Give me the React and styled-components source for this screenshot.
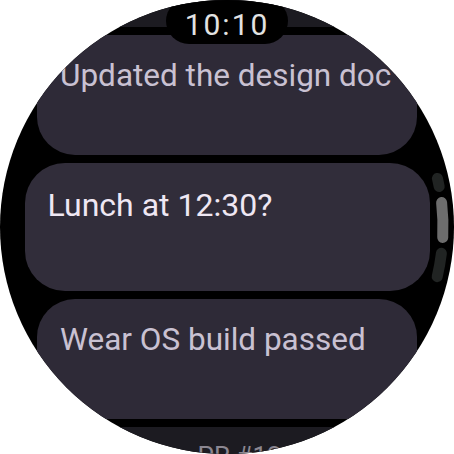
import styled, { createGlobalStyle } from "styled-components";

const GlobalStyle = createGlobalStyle`
  html, body {
    margin: 0;
    padding: 0;
    background: #ffffff;
  }
  body {
    font-family: Roboto, "Noto Sans", sans-serif;
  }
`;

// first item is scrolled up behind the clock, its text is out of view
const messages = [
  { id: 0, text: "", size: "far" },
  { id: 1, text: "Updated the design doc", size: "near" },
  { id: 2, text: "Lunch at 12:30?", size: "focus" },
  { id: 3, text: "Wear OS build passed", size: "near" },
  { id: 4, text: "Reviewing PR #1284", size: "far" },
];

const sizes = {
  focus: { w: 405, h: 128, r: 40, fs: 32, lh: 40, pt: 22, pl: 23, bg: "#312d3a", fg: "#efe7f3" },
  near: { w: 380, h: 120, r: 38, fs: 31.5, lh: 38, pt: 22, pl: 23, bg: "#2e2a37", fg: "#c9c1d2" },
  far: { w: 350, h: 110, r: 34, fs: 26, lh: 32, pt: 13, pl: 22, bg: "#1c1b21", fg: "#8b8791" },
};

// arc helper for the curved scroll indicator
const R = 216;
const pt = (deg) => {
  const a = (deg * Math.PI) / 180;
  return `${(227 + R * Math.cos(a)).toFixed(2)} ${(227 + R * Math.sin(a)).toFixed(2)}`;
};
const arc = (from, to) => `M ${pt(from)} A ${R} ${R} 0 0 1 ${pt(to)}`;

const ScrollIndicator = () => (
  <IndicatorSvg viewBox="0 0 454 454" width="454" height="454">
    <path d={arc(-13, -10.8)} stroke="#212423" strokeWidth="11" strokeLinecap="round" fill="none" />
    <path d={arc(-6.5, 2.8)} stroke="#6d6d6d" strokeWidth="11" strokeLinecap="round" fill="none" />
    <path d={arc(7, 13.3)} stroke="#212423" strokeWidth="11" strokeLinecap="round" fill="none" />
  </IndicatorSvg>
);

export default function App() {
  return (
    <>
      <GlobalStyle />
      <Watch>
        <List>
          {messages.map((m) => (
            <Card key={m.id} $size={m.size}>
              {m.text && <CardText $size={m.size}>{m.text}</CardText>}
            </Card>
          ))}
        </List>
        <TimePill>10:10</TimePill>
        <ScrollIndicator />
      </Watch>
    </>
  );
}

const Watch = styled.div`
  position: relative;
  width: 454px;
  height: 454px;
  border-radius: 50%;
  overflow: hidden;
  background: #000000;
`;

const List = styled.div`
  display: flex;
  flex-direction: column;
  align-items: center;
  gap: 8px;
  margin-top: -83px;
`;

const Card = styled.div`
  flex: none;
  box-sizing: border-box;
  width: ${(p) => sizes[p.$size].w}px;
  height: ${(p) => sizes[p.$size].h}px;
  border-radius: ${(p) => sizes[p.$size].r}px;
  padding: ${(p) => sizes[p.$size].pt}px ${(p) => sizes[p.$size].pl}px 0;
  background: ${(p) => sizes[p.$size].bg};
`;

const CardText = styled.p`
  margin: 0;
  font-family: Roboto, "Noto Sans", sans-serif;
  font-weight: 400;
  white-space: nowrap;
  font-size: ${(p) => sizes[p.$size].fs}px;
  line-height: ${(p) => sizes[p.$size].lh}px;
  color: ${(p) => sizes[p.$size].fg};
`;

const TimePill = styled.div`
  position: absolute;
  top: -2px;
  left: 166px;
  width: 122px;
  height: 46px;
  box-sizing: border-box;
  padding-top: 12px;
  border-radius: 23px;
  background: #000000;
  color: #e2e2e2;
  font-family: Roboto, "Noto Sans", sans-serif;
  font-size: 30px;
  line-height: 30px;
  letter-spacing: 2px;
  text-align: center;
`;

const IndicatorSvg = styled.svg`
  position: absolute;
  top: 0;
  left: 0;
  pointer-events: none;
`;
